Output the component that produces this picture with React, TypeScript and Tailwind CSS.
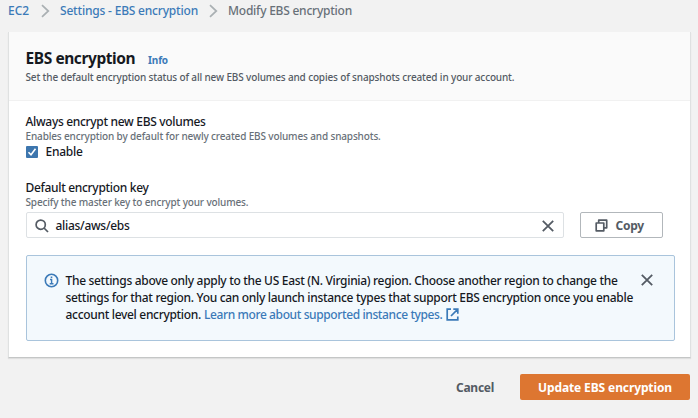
import type { ReactNode } from "react";

function Chevron() {
  return (
    <svg width="9" height="14" viewBox="0 0 9 14" fill="none" stroke="#aab0b3" strokeWidth="1.7">
      <path d="M1 1.2 7.3 7 1 12.8" />
    </svg>
  );
}

function Close() {
  return (
    <svg width="12" height="12" viewBox="0 0 12 12" fill="none" stroke="#545b64" strokeWidth="1.8">
      <path d="M.8.8 11.2 11.2M11.2.8.8 11.2" />
    </svg>
  );
}

function Label({ children }: { children: ReactNode }) {
  return <div className="h-[15px] text-[12px] leading-[16px] font-medium tracking-[-0.317px] text-[#16191f]">{children}</div>;
}

function Hint({ children }: { children: ReactNode }) {
  return <div className="h-[14px] text-[10px] leading-[14px] font-medium tracking-[-0.143px] text-[#687078]">{children}</div>;
}

export default function App() {
  return (
    <div className="h-[418px] w-[698px] overflow-hidden bg-[#f2f2f2] pr-[8px] pl-[8px] font-['Noto_Sans',sans-serif] whitespace-nowrap">
      <nav className="flex h-[32px] items-start text-[12px] leading-[16px] font-medium">
        <div className="flex h-[16px] items-center pt-[6px]">
          <a className="w-[33px] tracking-[-0.057px] text-[#3b7ab8]">EC2</a>
          <Chevron />
          <a className="ml-[10px] w-[149px] tracking-[-0.197px] text-[#3b7ab8]">Settings - EBS encryption</a>
          <Chevron />
          <span className="ml-[10px] tracking-[-0.232px] text-[#687078]">Modify EBS encryption</span>
        </div>
      </nav>

      <main className="h-[326px] w-[683px] border border-t-0 border-[#dfe1e1] border-b-[#c4c6c6] bg-white shadow-[0_1px_1px_rgba(0,0,0,0.08)]">
        <header className="h-[69px] border-b border-[#f1f1f1] bg-[#fafafa] pt-[15px] pl-[16.5px]">
          <div className="flex h-[23px] items-baseline">
            <h1 className="w-[122.5px] text-[15.5px] leading-[22px] font-bold tracking-[-0.42px] text-[#16191f]">EBS encryption</h1>
            <a className="text-[10px] leading-[14px] font-bold tracking-[-0.129px] text-[#3b7ab8]">Info</a>
          </div>
          <p className="text-[10px] leading-[14px] font-medium tracking-[-0.143px] text-[#545b64]">
            Set the default encryption status of all new EBS volumes and copies of snapshots created in your account.
          </p>
        </header>

        <div className="pt-[13px] pl-[16.5px]">
          <Label>Always encrypt new EBS volumes</Label>
          <Hint>Enables encryption by default for newly created EBS volumes and snapshots.</Hint>
          <div className="flex h-[17px] items-center gap-[8px]">
            <span className="flex size-[12px] items-center justify-center rounded-[1px] bg-[#3d76ae]">
              <svg width="10" height="10" viewBox="0 0 10 10" fill="none" stroke="#fff" strokeWidth="1.6">
                <path d="M1.5 5.2 4 7.7 8.5 1.8" />
              </svg>
            </span>
            <span className="text-[12px] leading-[16px] font-medium tracking-[-0.273px] text-[#16191f]">Enable</span>
          </div>

          <div className="mt-[20px]">
            <Label>Default encryption key</Label>
            <Hint>Specify the master key to encrypt your volumes.</Hint>
          </div>

          <div className="mt-[3px] flex gap-[16px]">
            <div className="flex h-[26px] w-[538px] items-center rounded-[2px] border border-[#dde1e4] bg-white pt-[1px] pr-[9px] pl-[8px]">
              <svg width="14" height="14" viewBox="0 0 14 14" fill="none" stroke="#545b64" strokeWidth="1.7">
                <circle cx="5.7" cy="5.7" r="4.6" />
                <path d="m9 9 4 4" />
              </svg>
              <span className="ml-[7px] text-[12px] leading-[16px] font-medium tracking-[-0.294px] text-[#16191f]">alias/aws/ebs</span>
              <span className="ml-auto">
                <Close />
              </span>
            </div>
            <button className="flex h-[26px] w-[83px] items-center rounded-[2px] border border-[#b2b7bb] bg-white pt-[1px] pl-[14px]">
              <svg width="13" height="13" viewBox="0 0 13 13" fill="none" stroke="#545b64" strokeWidth="1.7" strokeLinejoin="round">
                <path d="M1.2 4h7.6v7.8H1.2z" />
                <path d="M3.7 4V1.2h8v7.6H8.8" />
              </svg>
              <span className="ml-[8px] text-[12px] leading-[16px] font-bold tracking-[-0.227px] text-[#545b64]">Copy</span>
            </button>
          </div>

          <div className="mt-[17px] flex h-[86px] w-[649px] rounded-[2px] border border-[#a9c4dc] bg-[#f3f9fd] pt-[16px] pl-[17px]">
            <svg className="mt-[1px]" width="15" height="15" viewBox="0 0 15 15" fill="none" stroke="#3b7ab8" strokeWidth="1.6">
              <circle cx="7.5" cy="7.5" r="6.2" />
              <path d="M6 6.5h1.6v4M5.7 10.7h3.8M6.7 4.2h1.6" strokeWidth="1.4" />
            </svg>
            <div className="ml-[7px] w-[575px] text-[12px] leading-[17px] font-medium tracking-[-0.314px] text-[#16191f]">
              <div>The settings above only apply to the US East (N. Virginia) region. Choose another region to change the</div>
              <div>settings for that region. You can only launch instance types that support EBS encryption once you enable</div>
              <div className="flex">
                <span className="w-[138.5px]">account level encryption.</span>
                <a className="flex items-center tracking-[-0.391px] text-[#3b7ab8]">
                  Learn more about supported instance types.
                  <svg className="ml-[4px]" width="13" height="13" viewBox="0 0 13 13" fill="none" stroke="#3b7ab8" strokeWidth="1.7">
                    <path d="M5 1.2H1.2v10.6h10.6V8.5M7.3 1.2h4.5v4.5M11.6 1.4 5 8" />
                  </svg>
                </a>
              </div>
            </div>
            <span className="mt-[2px]">
              <Close />
            </span>
          </div>
        </div>
      </main>

      <footer className="flex h-[42px] w-[682px] items-end justify-end text-[12px] leading-[16px] font-bold">
        <button className="mr-[26px] flex h-[26px] items-center pt-[1px] tracking-[-0.271px] text-[#545b64]">Cancel</button>
        <button className="flex h-[26px] w-[170px] items-center justify-center rounded-[2px] bg-[#dd7631] pt-[1px] tracking-[-0.115px] text-white">Update EBS encryption</button>
      </footer>
    </div>
  );
}
